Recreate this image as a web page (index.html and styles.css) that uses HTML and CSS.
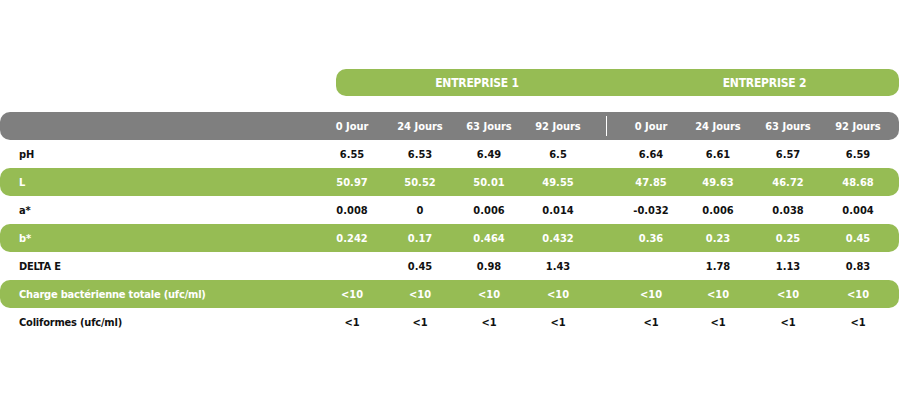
FILE: index.html
```html
<!DOCTYPE html>
<html lang="fr">
<head>
<meta charset="utf-8">
<link rel="stylesheet" href="styles.css">
</head>
<body>
<div class="page">
  <div class="companies">
    <div class="company c1">ENTREPRISE 1</div>
    <div class="company c2">ENTREPRISE 2</div>
  </div>
  <div class="table">
    <div class="row head">
      <div class="label"></div>
      <div>0 Jour</div><div>24 Jours</div><div>63 Jours</div><div>92 Jours</div>
      <div class="sep"></div>
      <div>0 Jour</div><div>24 Jours</div><div>63 Jours</div><div>92 Jours</div>
    </div>
    <div class="row">
      <div class="label">pH</div>
      <div>6.55</div><div>6.53</div><div>6.49</div><div>6.5</div>
      <div class="sep"></div>
      <div>6.64</div><div>6.61</div><div>6.57</div><div>6.59</div>
    </div>
    <div class="row green">
      <div class="label">L</div>
      <div>50.97</div><div>50.52</div><div>50.01</div><div>49.55</div>
      <div class="sep"></div>
      <div>47.85</div><div>49.63</div><div>46.72</div><div>48.68</div>
    </div>
    <div class="row">
      <div class="label">a*</div>
      <div>0.008</div><div>0</div><div>0.006</div><div>0.014</div>
      <div class="sep"></div>
      <div>-0.032</div><div>0.006</div><div>0.038</div><div>0.004</div>
    </div>
    <div class="row green">
      <div class="label">b*</div>
      <div>0.242</div><div>0.17</div><div>0.464</div><div>0.432</div>
      <div class="sep"></div>
      <div>0.36</div><div>0.23</div><div>0.25</div><div>0.45</div>
    </div>
    <div class="row">
      <div class="label">DELTA E</div>
      <div></div><div>0.45</div><div>0.98</div><div>1.43</div>
      <div class="sep"></div>
      <div></div><div>1.78</div><div>1.13</div><div>0.83</div>
    </div>
    <div class="row green">
      <div class="label">Charge bactérienne totale (ufc/ml)</div>
      <div>&lt;10</div><div>&lt;10</div><div>&lt;10</div><div>&lt;10</div>
      <div class="sep"></div>
      <div>&lt;10</div><div>&lt;10</div><div>&lt;10</div><div>&lt;10</div>
    </div>
    <div class="row">
      <div class="label">Coliformes (ufc/ml)</div>
      <div>&lt;1</div><div>&lt;1</div><div>&lt;1</div><div>&lt;1</div>
      <div class="sep"></div>
      <div>&lt;1</div><div>&lt;1</div><div>&lt;1</div><div>&lt;1</div>
    </div>
  </div>
</div>
</body>
</html>
```
FILE: styles.css
```css
html, body {
  margin: 0;
  padding: 0;
  background: #ffffff;
}
body {
  font-family: "Liberation Sans Narrow", "DejaVu Sans Condensed", "Liberation Sans", sans-serif;
  font-weight: bold;
  color: #111111;
}
.page {
  width: 900px;
  padding-top: 69px;
}
.companies {
  display: flex;
  margin-left: 336px;
  width: 563px;
  height: 27px;
  background: #96bc54;
  border-radius: 10px;
  color: #ffffff;
  font-size: 12px;
  letter-spacing: -0.2px;
}
.company {
  display: flex;
  align-items: center;
  justify-content: center;
}
.c1 {
  width: 282px;
}
.c2 {
  flex: 1;
  padding-left: 12px;
}
.table {
  margin-top: 16px;
  width: 899px;
}
.row {
  display: grid;
  grid-template-columns: 1fr 68px 68px 70px 68px 28px 62px 72px 68px 72px;
  padding-right: 5px;
  height: 28px;
  align-items: center;
  font-size: 11px;
  text-align: center;
  line-height: 14px;
  padding-top: 1px;
  box-sizing: border-box;
}
.row .label {
  text-align: left;
  padding-left: 19px;
  letter-spacing: -0.2px;
}
.head {
  background: #7f7f7f;
  color: #ffffff;
  border-radius: 10px;
}
.green {
  background: #96bc54;
  color: #ffffff;
  border-radius: 10px;
}
.sep {
  height: 100%;
  position: relative;
}
.head .sep::after {
  content: "";
  position: absolute;
  left: 14px;
  top: 3px;
  bottom: 4px;
  width: 1px;
  background: #ffffff;
}
```
